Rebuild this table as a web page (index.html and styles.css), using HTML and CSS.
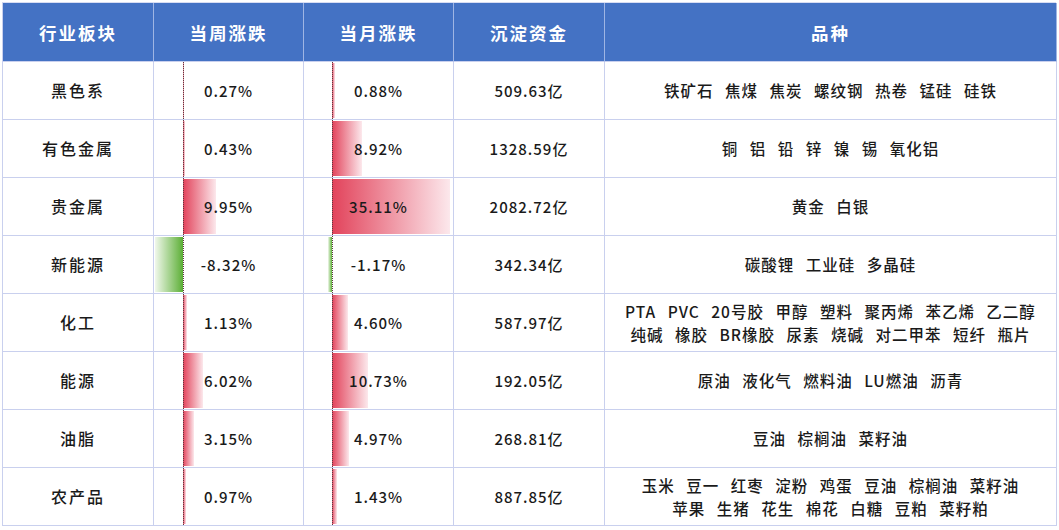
FILE: index.html
```html
<!DOCTYPE html>
<html lang="zh-CN">
<head>
<meta charset="utf-8">
<title>行业板块</title>
<link rel="stylesheet" href="styles.css">
</head>
<body>
<div class="table">
  <div class="th">行业板块</div>
  <div class="th">当周涨跌</div>
  <div class="th">当月涨跌</div>
  <div class="th">沉淀资金</div>
  <div class="th">品种</div>

  <div class="td name">黑色系</div>
  <div class="td bar-cell wk"><span class="bar pos" style="width:1px"></span><span class="axis"></span><span class="val">0.27%</span></div>
  <div class="td bar-cell mo"><span class="bar pos" style="width:3px"></span><span class="axis"></span><span class="val">0.88%</span></div>
  <div class="td fund">509.63亿</div>
  <div class="td items">铁矿石 焦煤 焦炭 螺纹钢 热卷 锰硅 硅铁</div>

  <div class="td name">有色金属</div>
  <div class="td bar-cell wk"><span class="bar pos" style="width:1.5px"></span><span class="axis"></span><span class="val">0.43%</span></div>
  <div class="td bar-cell mo"><span class="bar pos" style="width:30px"></span><span class="axis"></span><span class="val">8.92%</span></div>
  <div class="td fund">1328.59亿</div>
  <div class="td items">铜 铝 铅 锌 镍 锡 氧化铝</div>

  <div class="td name">贵金属</div>
  <div class="td bar-cell wk"><span class="bar pos" style="width:33px"></span><span class="axis"></span><span class="val">9.95%</span></div>
  <div class="td bar-cell mo"><span class="bar pos" style="width:118px"></span><span class="axis"></span><span class="val">35.11%</span></div>
  <div class="td fund">2082.72亿</div>
  <div class="td items">黄金 白银</div>

  <div class="td name">新能源</div>
  <div class="td bar-cell wk"><span class="bar neg" style="width:28px"></span><span class="axis"></span><span class="val">-8.32%</span></div>
  <div class="td bar-cell mo"><span class="bar neg" style="width:4px"></span><span class="axis"></span><span class="val">-1.17%</span></div>
  <div class="td fund">342.34亿</div>
  <div class="td items">碳酸锂 工业硅 多晶硅</div>

  <div class="td name">化工</div>
  <div class="td bar-cell wk"><span class="bar pos" style="width:3.5px"></span><span class="axis"></span><span class="val">1.13%</span></div>
  <div class="td bar-cell mo"><span class="bar pos" style="width:15.5px"></span><span class="axis"></span><span class="val">4.60%</span></div>
  <div class="td fund">587.97亿</div>
  <div class="td items">PTA PVC 20号胶 甲醇 塑料 聚丙烯 苯乙烯 乙二醇<br>纯碱 橡胶 BR橡胶 尿素 烧碱 对二甲苯 短纤 瓶片</div>

  <div class="td name">能源</div>
  <div class="td bar-cell wk"><span class="bar pos" style="width:20px"></span><span class="axis"></span><span class="val">6.02%</span></div>
  <div class="td bar-cell mo"><span class="bar pos" style="width:36px"></span><span class="axis"></span><span class="val">10.73%</span></div>
  <div class="td fund">192.05亿</div>
  <div class="td items">原油 液化气 燃料油 LU燃油 沥青</div>

  <div class="td name">油脂</div>
  <div class="td bar-cell wk"><span class="bar pos" style="width:10.5px"></span><span class="axis"></span><span class="val">3.15%</span></div>
  <div class="td bar-cell mo"><span class="bar pos" style="width:16.5px"></span><span class="axis"></span><span class="val">4.97%</span></div>
  <div class="td fund">268.81亿</div>
  <div class="td items">豆油 棕榈油 菜籽油</div>

  <div class="td name">农产品</div>
  <div class="td bar-cell wk"><span class="bar pos" style="width:3px"></span><span class="axis"></span><span class="val">0.97%</span></div>
  <div class="td bar-cell mo"><span class="bar pos" style="width:5px"></span><span class="axis"></span><span class="val">1.43%</span></div>
  <div class="td fund">887.85亿</div>
  <div class="td items">玉米 豆一 红枣 淀粉 鸡蛋 豆油 棕榈油 菜籽油<br>苹果 生猪 花生 棉花 白糖 豆粕 菜籽粕</div>
</div>
</body>
</html>
```

FILE: styles.css
```css
* { box-sizing: border-box; }
html, body { margin: 0; padding: 0; background: #ffffff; }
body { padding: 2px 0 0 2px; font-family: "Noto Sans CJK SC", "Noto Sans", sans-serif; color: #1a1a1a; }

.table {
  display: grid;
  grid-template-columns: 151px 150px 150px 151px 452px;
  grid-template-rows: 59px repeat(8, 58px);
  width: 1054px;
  border-left: 1px solid #c9d0ee;
  border-top: 1px solid #d8ddf3;
}

.th {
  background: #4472c4;
  color: #ffffff;
  font-weight: 700;
  font-size: 17.5px;
  letter-spacing: 2px;
  display: flex;
  align-items: center;
  justify-content: center;
  border-right: 1px solid #9fb5e4;
  border-bottom: 1px solid #c9d0ee;
}

.td {
  display: flex;
  align-items: center;
  justify-content: center;
  text-align: center;
  font-size: 15px;
  font-weight: 500;
  letter-spacing: 1px;
  border-right: 1px solid #c9d0ee;
  border-bottom: 1px solid #c9d0ee;
  line-height: 23px;
}

.name { font-size: 16px; letter-spacing: 2px; }
.items { font-size: 15.5px; word-spacing: 7px; }

.bar-cell { position: relative; }
.bar-cell .val { position: relative; }
.bar-cell.wk { --axis: 29px; }
.bar-cell.mo { --axis: 28px; }

.axis {
  position: absolute;
  top: 0;
  bottom: 0;
  left: var(--axis);
  border-left: 1px dotted #5a3a40;
}

.bar {
  position: absolute;
  top: 1px;
  bottom: 1px;
}
.bar.pos {
  left: var(--axis);
  background: linear-gradient(to right, #e2435b, #fce8ec);
}
.bar.neg {
  right: calc(100% - var(--axis));
  background: linear-gradient(to left, #5caf36, #f1f8ec);
}
```
